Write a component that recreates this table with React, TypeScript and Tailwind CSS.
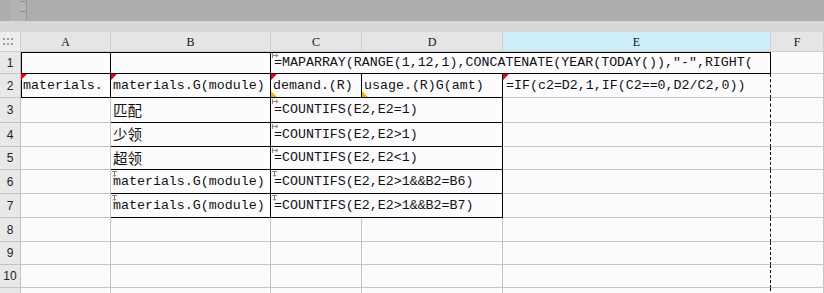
import { ReactNode } from "react";
import { twMerge } from "tailwind-merge";

const mono = "font-['Liberation_Mono','Noto_Sans_CJK_SC',monospace]";

// little corner marks that the sheet puts on cells
const RedMark = () => (
    <span className="absolute left-0 top-0 h-0 w-0 border-t-[6px] border-r-[6px] border-t-[#e6001e] border-r-transparent" />
);

const AmberMark = () => (
    <span className="absolute bottom-0 left-0 h-0 w-0 border-b-[6px] border-r-[6px] border-b-[#f2b705] border-r-transparent" />
);

const ArrowRight = () => (
    <svg className="absolute left-[1px] top-[1px]" width="7" height="5" viewBox="0 0 7 5" fill="none" stroke="#8a8a8a" strokeWidth="1">
        <path d="M0.5 0v5M0.5 2.5h5.5M4 1l2 1.5L4 4" />
    </svg>
);

const ArrowDown = () => (
    <svg className="absolute left-[1px] top-[1px]" width="5" height="6" viewBox="0 0 5 6" fill="none" stroke="#8a8a8a" strokeWidth="1">
        <path d="M0 0.5h5M2.5 0.5v5M1 4l1.5 1.5L4 4" />
    </svg>
);

type CellProps = {
    className?: string;
    children?: ReactNode;
    red?: boolean;
    amber?: boolean;
    arrow?: "right" | "down";
};

const Cell = ({ className, children, red, amber, arrow }: CellProps) => (
    <div
        className={twMerge(
            "relative flex items-center overflow-hidden whitespace-nowrap border-r border-b border-[#c6c6c6] pl-[2px] text-[13.3px] text-[#111]",
            mono,
            className
        )}
    >
        {red && <RedMark />}
        {amber && <AmberMark />}
        {arrow === "right" && <ArrowRight />}
        {arrow === "down" && <ArrowDown />}
        {children}
    </div>
);

const RowHead = ({ n }: { n?: number }) => (
    <div className="flex items-center justify-center border-r border-b border-[#c2c2c2] bg-[#e8e8e8] font-['Liberation_Sans',sans-serif] text-[12px] text-[#222]">
        {n}
    </div>
);

const ColHead = ({ label, active }: { label: string; active?: boolean }) => (
    <div
        className={twMerge(
            "flex items-center justify-center border-r border-b border-[#cfcfcf] bg-[#e5e5e5] pt-[1px] font-['Liberation_Serif',serif] text-[12px] text-[#111]",
            active && "bg-[#cdedf9]"
        )}
    >
        {label}
    </div>
);

const Zh = ({ children }: { children: ReactNode }) => (
    <span className="font-['Noto_Sans_CJK_SC',sans-serif] text-[14.5px] leading-none">{children}</span>
);

const pageBreak = "border-r-black [border-right-style:dashed]";
const boxed = "border-black";

const bRows = [
    { b: <Zh>匹配</Zh>, c: "=COUNTIFS(E2,E2=1)", arrow: "right" as const, bArrow: undefined },
    { b: <Zh>少领</Zh>, c: "=COUNTIFS(E2,E2>1)", arrow: "right" as const, bArrow: undefined },
    { b: <Zh>超领</Zh>, c: "=COUNTIFS(E2,E2<1)", arrow: "right" as const, bArrow: undefined },
    { b: "materials.G(module)", c: "=COUNTIFS(E2,E2>1&&B2=B6)", arrow: "down" as const, bArrow: "down" as const },
    { b: "materials.G(module)", c: "=COUNTIFS(E2,E2>1&&B2=B7)", arrow: "down" as const, bArrow: "down" as const },
];

export default function App() {
    return (
        <div className="h-[293px] w-[824px] overflow-hidden bg-[#fcfcfe]">
            {/* toolbar strip */}
            <div className="flex h-[21px] bg-[#adadad]">
                <div className="ml-[10px] flex h-full w-[17px] flex-col items-end justify-start gap-[9px] border-r border-[#959595] bg-[#b3b3b3] pt-[1px]">
                    <span className="h-px w-[6px] bg-[#8e8e8e]" />
                    <span className="h-px w-[6px] bg-[#8e8e8e]" />
                </div>
            </div>
            <div className="h-[11px] bg-[#d7d7da]" />

            <div className="grid grid-cols-[21px_90px_160px_91px_141px_268px_1fr] grid-rows-[20px_22px_24px_25px_24px_23px_24px_24px_24px_23px_23px_24px]">
                {/* header row */}
                <div className="grid grid-cols-[repeat(3,2px)] content-center justify-start gap-x-[2px] gap-y-[3px] border-r border-b border-[#cfcfcf] bg-[#eeeeee] pl-[3px]">
                    {Array.from({ length: 6 }).map((_, i) => (
                        <span key={i} className="h-[2px] w-[2px] bg-[#9a9a9a]" />
                    ))}
                </div>
                <ColHead label="A" />
                <ColHead label="B" />
                <ColHead label="C" />
                <ColHead label="D" />
                <ColHead label="E" active />
                <ColHead label="F" />

                {/* row 1 */}
                <RowHead n={1} />
                <Cell className={twMerge(boxed, "shadow-[inset_1px_1px_0_#000]")} />
                <Cell className={twMerge(boxed, "shadow-[inset_0_1px_0_#000]")} />
                <Cell className={twMerge(boxed, "col-span-3 pl-[3px] shadow-[inset_0_1px_0_#000]")} arrow="right">
                    =MAPARRAY(RANGE(1,12,1),CONCATENATE(YEAR(TODAY()),"-",RIGHT(
                </Cell>
                <Cell />

                {/* row 2 */}
                <RowHead n={2} />
                <Cell className={twMerge(boxed, "shadow-[inset_1px_0_0_#000]")} red>
                    materials.
                </Cell>
                <Cell className={boxed} red>
                    materials.G(module)
                </Cell>
                <Cell className={boxed} red amber>
                    demand.(R)
                </Cell>
                <Cell className={boxed} amber>
                    usage.(R)G(amt)
                </Cell>
                <Cell className={twMerge(pageBreak, "pl-[3px]")} red>
                    =IF(c2=D2,1,IF(C2==0,D2/C2,0))
                </Cell>
                <Cell />

                {/* rows 3-7 */}
                {bRows.map((r, i) => (
                    <div key={i} className="contents">
                        <RowHead n={i + 3} />
                        <Cell />
                        <Cell className={boxed} arrow={r.bArrow}>
                            {r.b}
                        </Cell>
                        <Cell className={twMerge(boxed, "col-span-2 pl-[3px]")} arrow={r.arrow}>
                            {r.c}
                        </Cell>
                        <Cell className={pageBreak} />
                        <Cell />
                    </div>
                ))}

                {/* empty rows; the last one is only a sliver at the bottom */}
                {[8, 9, 10, undefined].map((n, i) => (
                    <div key={i} className="contents">
                        <RowHead n={n} />
                        <Cell />
                        <Cell />
                        <Cell />
                        <Cell />
                        <Cell className={pageBreak} />
                        <Cell />
                    </div>
                ))}
            </div>
        </div>
    );
}
